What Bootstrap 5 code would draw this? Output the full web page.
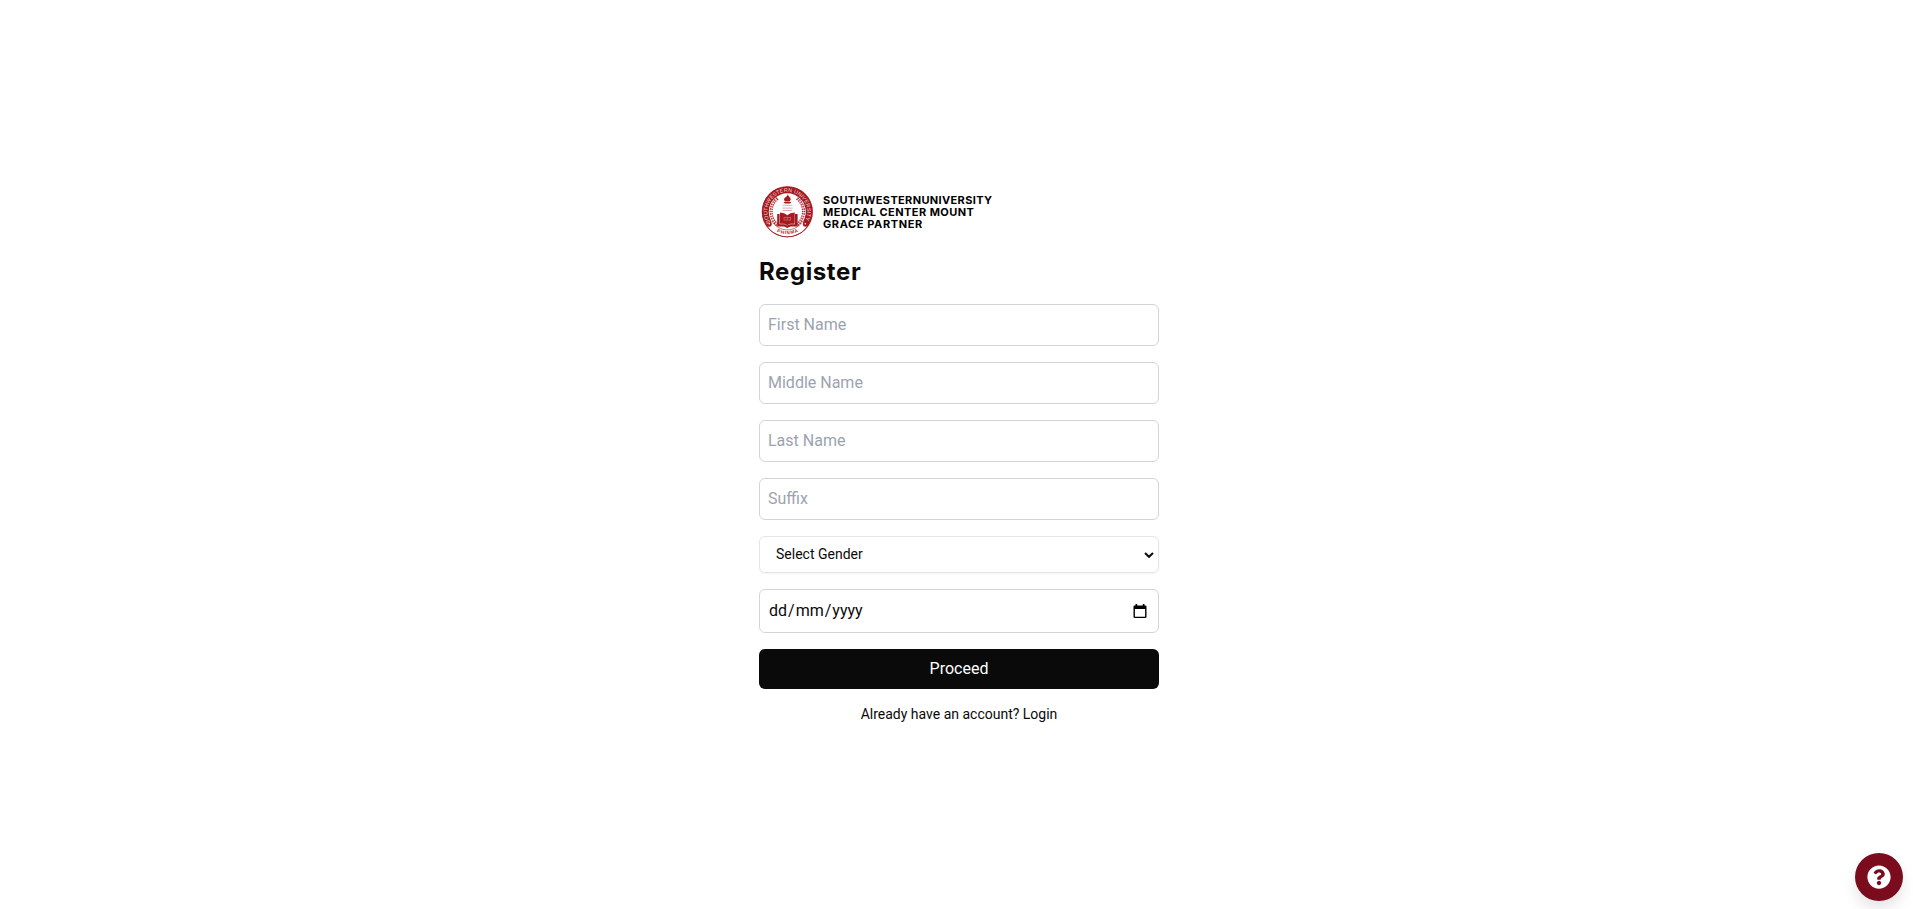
<!DOCTYPE html>
<html lang="en">
<head>
<meta charset="utf-8">
<meta name="viewport" content="width=device-width, initial-scale=1">
<title>Register</title>
<link href="https://cdn.jsdelivr.net/npm/bootstrap@5.3.0/dist/css/bootstrap.min.css" rel="stylesheet">
<style>
  body { font-family: Roboto, "Liberation Sans", sans-serif; color: #0a0a0a; background: #fff; }
  .register-panel { width: 400px; margin-left: 5px; }
  .brand-text { font: 700 11px/12px Inter, Roboto, sans-serif; color: #000; letter-spacing: .35px; }
  .brand-text span { display: block; white-space: nowrap; }
  .brand-text .line-2 { letter-spacing: .45px; }
  .brand-text .line-3 { letter-spacing: .6px; }
  .page-title { font: 700 24px/32px Inter, Roboto, sans-serif; margin: 16px 0; letter-spacing: .6px; }
  .field { height: 42px; padding: 7px 8px 9px; border: 1px solid #d1d5db; border-radius: 6px; font-size: 16px; line-height: 24px; color: #0a0a0a; background: #fff; }
  .field::placeholder { color: #9ca3af; opacity: 1; }
  .gender { height: 37px; padding: 0 4px 0 16px; border: 1px solid #e5e5e5; border-radius: 6px; font-size: 14px; box-shadow: 0 1px 2px rgba(0,0,0,.05); }
  .birth { height: 44px; padding: 0 11px 0 9px; }
  .birth .sep { padding: 0 1px; }
  .btn-proceed { height: 40px; padding: 0; border: 0; border-radius: 6px; background: #0a0a0a; color: #fff; font-size: 16px; line-height: 40px; }
  .login-line { font-size: 14px; line-height: 20px; margin: -1px 0 1px; }
  .help-btn { width: 48px; height: 48px; right: 10px; bottom: 8px; background: #7a0c1e; border: 0; box-shadow: 0 8px 14px rgba(0,0,0,.1); }
</style>
</head>
<body>
<main class="min-vh-100 d-flex justify-content-center align-items-center">
  <div class="register-panel">
    <div class="d-flex align-items-center gap-2">
      <svg width="56" height="56" viewBox="0 0 56 56" role="img" aria-label="University seal">
        <defs>
          <path id="arcTop" d="M11.5 38.5A19.9 19.9 0 1 1 45 38.5"/>
          <path id="arcBottom" d="M14.5 45.6A22.8 22.8 0 0 0 42.1 45.6"/>
        </defs>
        <circle cx="28.3" cy="27.8" r="25.4" fill="#a6191e"/>
        <path d="M7.4 40.8A24.6 24.6 0 0 0 49.2 40.8L43.8 37.2A18.2 18.2 0 0 1 12.8 37.2Z" fill="#fff"/>
        <circle cx="28.3" cy="27.8" r="18.5" fill="#fff"/>
        <circle cx="28.3" cy="27.8" r="25.1" fill="none" stroke="#a6191e" stroke-width=".7"/>
        <path d="M12.9 37.2A18 18 0 0 0 43.7 37.2" fill="none" stroke="#a6191e" stroke-width=".6"/>
        <circle cx="10" cy="40" r="2.8" fill="#a6191e"/><circle cx="46.6" cy="40" r="2.8" fill="#a6191e"/>
        <circle cx="10.3" cy="39.8" r=".8" fill="#fff"/><circle cx="46.3" cy="39.8" r=".8" fill="#fff"/>
        <text font-family="Liberation Sans" font-size="5.4" fill="#fff" fill-opacity=".85"><textPath href="#arcTop" textLength="82">SOUTHWESTERN UNIVERSITY</textPath></text>
        <text font-family="Liberation Sans" font-size="4.6" font-weight="700" fill="#a6191e"><textPath href="#arcBottom" startOffset="4" textLength="22">PHINMA</textPath></text>
        <g fill="none" stroke="#a6191e">
          <path d="M18.6 14.4C9.8 21 10 34.2 19 41.5M38 14.4C46.8 21 46.6 34.2 37.6 41.5" stroke-width="3" stroke-dasharray="1.5 .9"/>
          <path d="M18.6 14.4C9.8 21 10 34.2 19 41.5M38 14.4C46.8 21 46.6 34.2 37.6 41.5" stroke="#fff" stroke-width=".6"/>
          <path d="M23.5 21.3h9.8M23.2 24.1h10.4M23.7 26.5h9.2" stroke-width=".9" opacity=".4"/>
        </g>
        <g fill="#a6191e">
          <path d="M28.8 10.2C29.4 12.8 32 13.2 31.7 15.7L30.7 17.4H26C23.8 14.9 26 13.7 27 13.1C27.6 12.3 28.3 12 28.8 10.2Z"/>
          <path d="M24.4 18H32.4L31 19.6H25.9Z"/>
          <path d="M18.2 30H20.6V40.2H25.6L28.3 41.6L31 40.2H36V30H38.6V42.6H31.4L28.3 44L25.2 42.6H18.2Z"/>
          <path d="M21 28.6Q25.5 28.6 28.3 31.2Q31.1 28.6 35.7 28.6V39.8H31.2L28.3 41.2L25.4 39.8H21Z"/>
        </g>
        <path d="M24.8 33.4h7.2M24.8 36h7.2M25 33.4v2.2M28.3 33.4v2.2M31.7 33.4v2.2" stroke="#fff" stroke-width=".5" opacity=".6"/>
      </svg>
      <div class="brand-text">
        <span>SOUTHWESTERNUNIVERSITY</span>
        <span class="line-2">MEDICAL CENTER MOUNT</span>
        <span class="line-3">GRACE PARTNER</span>
      </div>
    </div>
    <h1 class="page-title">Register</h1>
    <form class="d-flex flex-column gap-3">
      <input class="form-control field" type="text" placeholder="First Name">
      <input class="form-control field" type="text" placeholder="Middle Name">
      <input class="form-control field" type="text" placeholder="Last Name">
      <input class="form-control field" type="text" placeholder="Suffix">
      <div class="gender d-flex align-items-center justify-content-between" role="combobox">
        <span>Select Gender</span>
        <svg width="10" height="8" viewBox="0 0 10 8"><path d="M1 2l4 3.8L9 2" fill="none" stroke="#0a0a0a" stroke-width="2"/></svg>
      </div>
      <div class="field birth d-flex align-items-center justify-content-between">
        <span>dd<span class="sep">/</span>mm<span class="sep">/</span>yyyy</span>
        <svg width="14" height="15" viewBox="0 0 14 15"><path d="M2.5 0h1.7v1.4h5.6V0h1.7v1.4h.8a1.2 1.2 0 0 1 1.2 1.2v10.2a1.2 1.2 0 0 1-1.2 1.2H1.7a1.2 1.2 0 0 1-1.2-1.2V2.6a1.2 1.2 0 0 1 1.2-1.2h.8ZM1.9 5v7.7h10.2V5Z" fill="#000" fill-rule="evenodd"/></svg>
      </div>
      <button class="btn btn-proceed w-100" type="button">Proceed</button>
      <div class="login-line text-center">Already have an account? Login</div>
    </form>
  </div>
</main>
<button class="help-btn rounded-circle position-fixed d-flex align-items-center justify-content-center p-0" type="button" aria-label="Help">
  <svg width="24" height="24" viewBox="0 0 512 512" fill="#fff"><path d="M504 256c0 136.997-111.043 248-248 248S8 392.997 8 256C8 119.083 119.043 8 256 8s248 111.083 248 248zM262.655 90c-54.497 0-89.255 22.957-116.549 63.758-3.536 5.286-2.353 12.415 2.715 16.258l34.699 26.31c5.205 3.947 12.621 3.008 16.665-2.122 17.864-22.658 30.113-35.797 57.303-35.797 20.429 0 45.698 13.148 45.698 32.958 0 14.976-12.363 22.667-32.534 33.976C247.128 238.528 216 254.941 216 296v4c0 6.627 5.373 12 12 12h56c6.627 0 12-5.373 12-12v-1.333c0-28.462 83.186-29.647 83.186-106.667 0-58.002-60.165-102-116.531-102zM256 338c-25.365 0-46 20.635-46 46 0 25.364 20.635 46 46 46s46-20.636 46-46c0-25.364-20.635-46-46-46z"/></svg>
</button>
<script src="https://cdn.jsdelivr.net/npm/bootstrap@5.3.0/dist/js/bootstrap.bundle.min.js"></script>
</body>
</html>
